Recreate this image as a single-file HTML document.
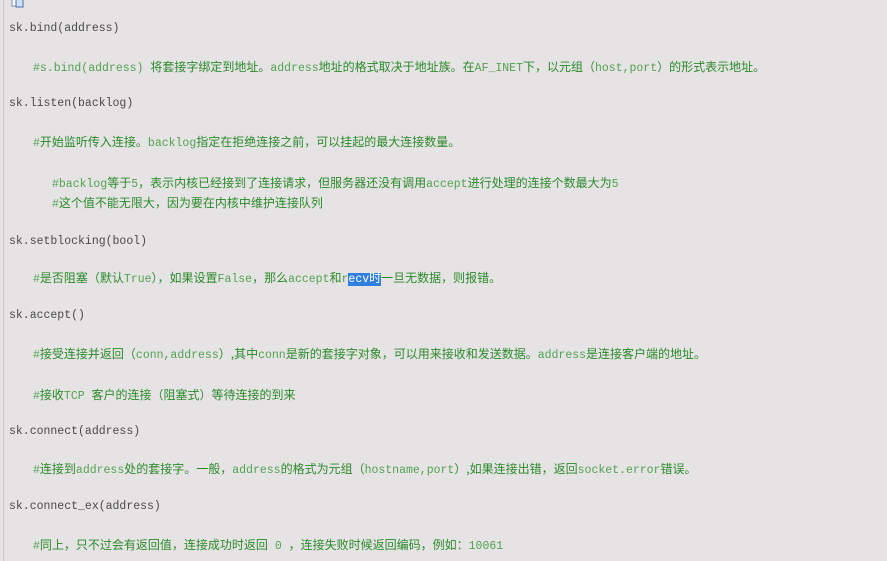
<!DOCTYPE html>
<html><head><meta charset="utf-8"><style>
html,body{margin:0;padding:0;}
body{width:887px;height:561px;background:#e6e3e4;position:relative;overflow:hidden;font-family:"Liberation Mono",monospace;font-size:11.5px;}
.bl{position:absolute;left:3px;top:0;width:1px;height:561px;background:#c9c6c7;}
.l{position:absolute;line-height:16px;white-space:pre;}
.t{left:9px;color:#4a4a4a;}
.g{left:33px;color:#52a152;}
.g2{left:52px;color:#52a152;}
.c{font-family:"Noto Sans CJK SC","WenQuanYi Zen Hei",sans-serif;font-size:12px;color:#2b8a2b;}
.sel{background:#2f7fe0;color:#fff;}
</style></head><body>
<div class="bl"></div>
<svg style="position:absolute;left:11px;top:0" width="14" height="8"><rect x="1" y="-4" width="8" height="10" fill="#fff" stroke="#7a8fb5"/><rect x="5" y="-2" width="7" height="9" fill="#cfe0f5" stroke="#4f70b0"/></svg>
<div class="l t" style="top:21px">sk.bind(address)</div>
<div class="l g" style="top:59px">#s.bind(address) <span class="c">将套接字绑定到地址。</span>address<span class="c">地址的格式取决于地址族。在</span>AF_INET<span class="c">下，以元组（</span>host,port<span class="c">）的形式表示地址。</span></div>
<div class="l t" style="top:96px">sk.listen(backlog)</div>
<div class="l g" style="top:134px">#<span class="c">开始监听传入连接。</span>backlog<span class="c">指定在拒绝连接之前，可以挂起的最大连接数量。</span></div>
<div class="l g2" style="top:175px">#backlog<span class="c">等于</span>5<span class="c">，表示内核已经接到了连接请求，但服务器还没有调用</span>accept<span class="c">进行处理的连接个数最大为</span>5</div>
<div class="l g2" style="top:195px">#<span class="c">这个值不能无限大，因为要在内核中维护连接队列</span></div>
<div class="l t" style="top:234px">sk.setblocking(bool)</div>
<div class="l g" style="top:270px">#<span class="c">是否阻塞（默认</span>True<span class="c">），如果设置</span>False<span class="c">，那么</span>accept<span class="c">和</span>r<span class="sel">ecv<span class="c" style="color:#fff">时</span></span><span class="c">一旦无数据，则报错。</span></div>
<div class="l t" style="top:308px">sk.accept()</div>
<div class="l g" style="top:346px">#<span class="c">接受连接并返回（</span>conn,address<span class="c">）,其中</span>conn<span class="c">是新的套接字对象，可以用来接收和发送数据。</span>address<span class="c">是连接客户端的地址。</span></div>
<div class="l g" style="top:387px">#<span class="c">接收</span>TCP <span class="c">客户的连接（阻塞式）等待连接的到来</span></div>
<div class="l t" style="top:424px">sk.connect(address)</div>
<div class="l g" style="top:461px">#<span class="c">连接到</span>address<span class="c">处的套接字。一般，</span>address<span class="c">的格式为元组（</span>hostname,port<span class="c">）,如果连接出错，返回</span>socket.error<span class="c">错误。</span></div>
<div class="l t" style="top:499px">sk.connect_ex(address)</div>
<div class="l g" style="top:537px">#<span class="c">同上，只不过会有返回值，连接成功时返回</span> 0 <span class="c">，连接失败时候返回编码，例如：</span>10061</div>
</body></html>
